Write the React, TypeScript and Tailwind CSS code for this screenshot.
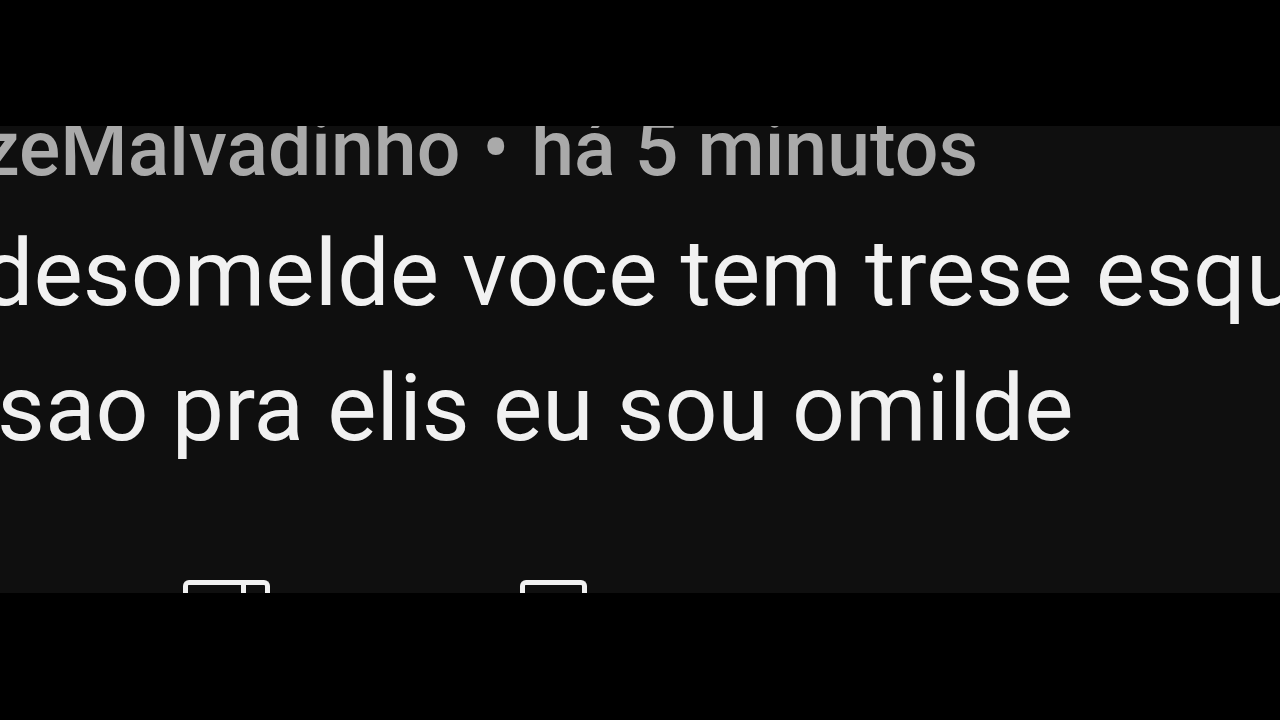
export default function App() {
  return (
    <div className="flex h-[720px] w-[1280px] flex-col bg-black font-['Roboto',sans-serif]">
      <div className="h-[126px] shrink-0" />
      <div className="relative h-[467px] shrink-0 overflow-hidden bg-[#0f0f0f]">
        <div className="-mt-[34px] flex flex-col">
          <div className="-ml-[19px] flex items-baseline gap-[22px] whitespace-nowrap text-[77px] font-medium leading-[115px] text-[#aaaaaa]">
            <span>zeMalvadinho</span>
            <span>•</span>
            <span>há 5 minutos</span>
          </div>
          <div className="-mt-[1px] whitespace-nowrap text-[93px] leading-[135px] text-[#f1f1f1]">
            <div className="-ml-[19px]">desomelde voce tem trese esquisitos</div>
            <div className="-ml-[3px]">sao pra elis eu sou omilde</div>
          </div>
        </div>
        <div className="absolute left-[183px] top-[454px] flex h-[30px] w-[87px] rounded-t-[6px] border-[5px] border-b-0 border-[#f1f1f1]">
          <div className="ml-[53px] h-full w-[5px] bg-[#f1f1f1]" />
        </div>
        <div className="absolute left-[520px] top-[454px] h-[30px] w-[67px] rounded-t-[6px] border-[5px] border-b-0 border-[#f1f1f1]" />
      </div>
      <div className="flex-1" />
    </div>
  );
}
